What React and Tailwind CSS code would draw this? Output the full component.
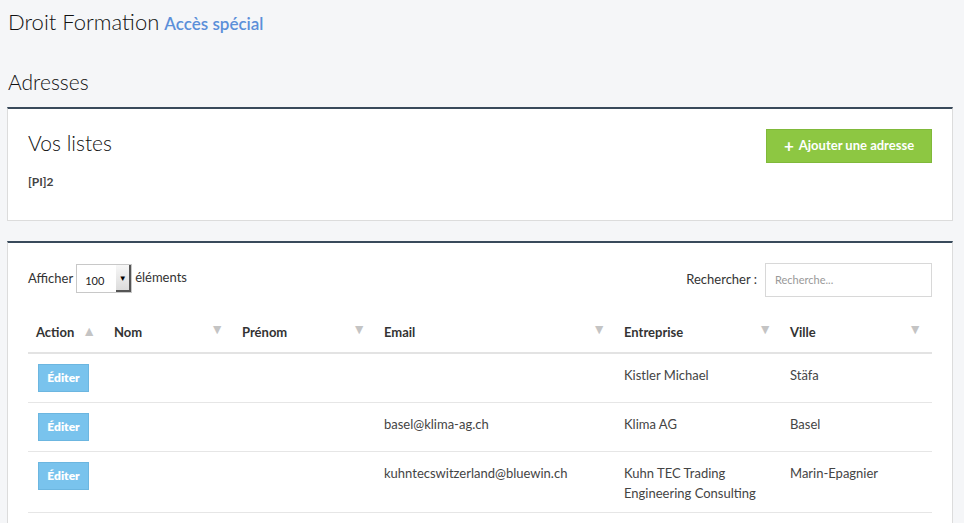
import React from "react";

const font = { fontFamily: "Lato, 'Open Sans', sans-serif" };

const cols = [
  { label: "Action", w: "w-[78px]", arrow: "up" },
  { label: "Nom", w: "w-[128px]", arrow: "down" },
  { label: "Prénom", w: "w-[142px]", arrow: "down" },
  { label: "Email", w: "w-[240px]", arrow: "down" },
  { label: "Entreprise", w: "w-[166px]", arrow: "down" },
  { label: "Ville", w: "", arrow: "down" },
];

const rows = [
  { email: "", entreprise: ["Kistler Michael"], ville: "Stäfa" },
  { email: "basel@klima-ag.ch", entreprise: ["Klima AG"], ville: "Basel" },
  { email: "kuhntecswitzerland@bluewin.ch", entreprise: ["Kuhn TEC Trading", "Engineering Consulting"], ville: "Marin-Epagnier" },
];

function Arrow({ dir }) {
  return (
    <span className="text-[14px] leading-none text-[#c4c4c4]">{dir === "up" ? "▲" : "▼"}</span>
  );
}

export default function App() {
  return (
    <div className="min-h-screen bg-[#f5f6f8] text-[#333] pl-[7px] pr-[11px]" style={font}>
      <div className="pt-[5px] pl-px flex items-baseline gap-[5px]">
        <span className="text-[22px] font-light text-[#111]">Droit Formation</span>
        <span className="text-[17px] font-semibold text-[#5b8fd9]">Accès spécial</span>
      </div>

      <h2 className="mt-[30px] pl-px text-[21px] font-light text-[#111] leading-[28px]">Adresses</h2>

      {/* Vos listes */}
      <div className="mt-[11px] bg-white border border-[#dcdcdc] border-t-2 border-t-[#394a5b] h-[114px] px-[20px] pt-[20px] flex justify-between">
        <div>
          <div className="text-[21px] font-light text-[#111] leading-[28px]">Vos listes</div>
          <div className="mt-[16px] text-[12px] font-bold text-[#444]">[PI]2</div>
        </div>
        <button className="h-[34px] w-[166px] bg-[#8dc742] border border-[#80b93a] text-white text-[13px] font-bold flex items-center justify-center gap-[5px]">
          <span className="text-[17px] leading-none font-bold -mt-[2px]">+</span>
          Ajouter une adresse
        </button>
      </div>

      {/* Table panel */}
      <div className="mt-[20px] bg-white border border-[#dcdcdc] border-t-2 border-t-[#394a5b] px-[20px] pt-[20px] h-[300px]">
        <div className="flex justify-between items-start">
          <div className="flex items-center gap-[3px] text-[13px] text-[#333] mt-[1px]">
            <span>Afficher</span>
            <div className="h-[29px] w-[56px] flex border border-[#c8c8c8] bg-white">
              <span className="flex-1 pl-[8px] pt-[8px] text-[11px] text-[#222]">100</span>
              <span className="w-[15px] bg-gradient-to-b from-[#f7f7f7] to-[#dcdcdc] border-r-2 border-b-2 border-[#555] flex items-center justify-center text-[8px] text-black">▼</span>
            </div>
            <span className="-mt-[2px]">éléments</span>
          </div>
          <div className="flex items-center gap-[8px] text-[13px] text-[#333]">
            <span>Rechercher :</span>
            <div className="h-[34px] w-[167px] border border-[#d8d8d8] px-[9px] flex items-center text-[11px] text-[#999]">
              Recherche...
            </div>
          </div>
        </div>

        <table className="mt-[15px] w-full border-collapse text-[13px] text-[#444]">
          <thead>
            <tr className="border-b-2 border-[#e3e3e3]">
              {cols.map((c) => (
                <th key={c.label} className={`${c.w} h-[41px] px-[8px] text-left font-bold text-[#333] relative`}>
                  <span className="relative top-[1px]">{c.label}</span>
                  <span className={`absolute right-[10px] ${c.arrow === "up" ? "top-[10px]" : "top-[8px]"}`}>
                    <Arrow dir={c.arrow} />
                  </span>
                </th>
              ))}
            </tr>
          </thead>
          <tbody>
            {rows.map((r, i) => (
              <tr key={i} className="border-b border-[#e6e6e6] align-top">
                <td className="px-[10px] pt-[10px] pb-[10px]">
                  <button className="h-[28px] w-[51px] bg-[#79c3ed] border border-[#6cb6e0] text-white text-[12px] font-extrabold">Éditer</button>
                </td>
                <td className="px-[8px]"></td>
                <td className="px-[8px]"></td>
                <td className="px-[8px] pt-[11px] leading-[20px]">{r.email}</td>
                <td className="px-[8px] pt-[11px] pb-[9px] leading-[20px]">
                  {r.entreprise.map((e) => (
                    <div key={e}>{e}</div>
                  ))}
                </td>
                <td className="px-[8px] pt-[11px] leading-[20px]">{r.ville}</td>
              </tr>
            ))}
          </tbody>
        </table>
      </div>
    </div>
  );
}
